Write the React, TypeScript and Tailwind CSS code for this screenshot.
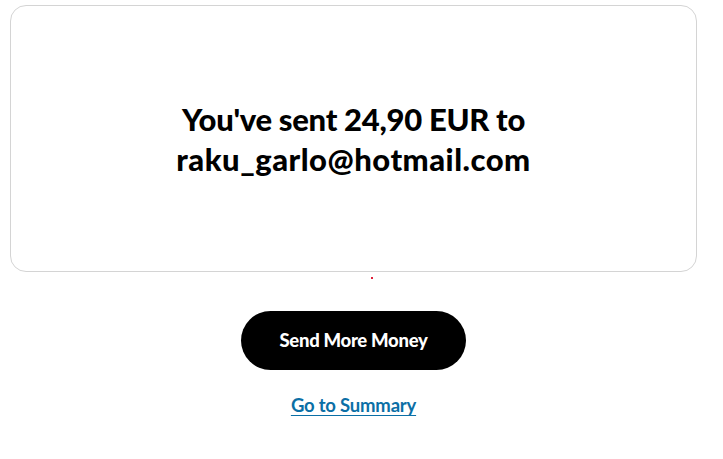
import React from 'react';

export default function App() {
  return (
    <div className="min-h-[459px] w-[707px] bg-white font-['Lato',sans-serif]">
      <div className="px-[10px] pt-[5px]">
        <div className="flex h-[267px] items-center justify-center rounded-[16px] border border-[#d4d4d4]">
          <h1 className="text-center text-[31px] font-black leading-[40px] tracking-[-0.3px] text-black">
            You've sent 24,90 EUR to
            <br />
            <span className="tracking-[0.5px]">raku_garlo@hotmail.com</span>
          </h1>
        </div>
      </div>
      <div className="flex justify-center pt-[5px]">
        <span className="ml-[37px] h-[2px] w-[2px] bg-[#e0203a]" />
      </div>
      <div className="mt-[32px] flex flex-col items-center">
        <button
          className="h-[59px] w-[225px] rounded-full bg-black text-[18.5px] font-black tracking-[-0.3px] text-white"
          type="button"
        >
          Send More Money
        </button>
        <a
          className="mt-[22px] text-[18.5px] font-bold tracking-[-0.2px] text-[#0b6fa6] underline underline-offset-[3px]"
          href="#"
        >
          Go to Summary
        </a>
      </div>
    </div>
  );
}
